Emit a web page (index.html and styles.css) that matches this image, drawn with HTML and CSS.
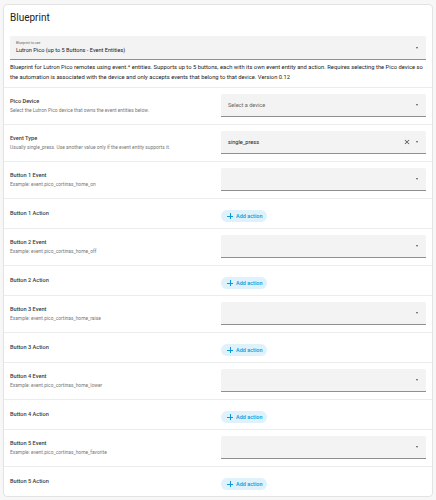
FILE: index.html
```html
<!DOCTYPE html>
<html>
<head>
	<title>Blueprint</title>
	<meta charset="utf-8">
	<link rel="stylesheet" href="styles.css">
</head>
<body>
	<div class="card">
		<!-- 标题 -->
		<h1 class="card-title">Blueprint</h1>
		<!-- 蓝图选择器 -->
		<div class="bp-select">
			<div class="bp-select-text">
				<span class="bp-select-label">Blueprint to use</span>
				<span class="bp-select-value">Lutron Pico (up to 5 Buttons - Event Entities)</span>
			</div>
			<i class="caret"></i>
		</div>
		<p class="bp-desc">Blueprint for Lutron Pico remotes using event.* entities. Supports up to 5 buttons, each with its own event entity and action. Requires selecting the Pico device so the automation is associated with the device and only accepts events that belong to that device. Version 0.12</p>

		<div class="row row-field">
			<div class="row-info">
				<div class="row-name">Pico Device</div>
				<div class="row-sub">Select the Lutron Pico device that owns the event entities below.</div>
			</div>
			<div class="field">
				<span class="field-text placeholder">Select a device</span>
				<i class="caret"></i>
			</div>
		</div>
		<div class="row row-field">
			<div class="row-info">
				<div class="row-name">Event Type</div>
				<div class="row-sub">Usually single_press. Use another value only if the event entity supports it.</div>
			</div>
			<div class="field">
				<span class="field-text">single_press</span>
				<svg class="clear" width="8" height="8" viewBox="0 0 24 24"><path d="M19,6.41L17.59,5L12,10.59L6.41,5L5,6.41L10.59,12L5,17.59L6.41,19L12,13.41L17.59,19L19,17.59L13.41,12L19,6.41Z"/></svg>
				<i class="caret"></i>
			</div>
		</div>

		<div class="row row-field">
			<div class="row-info">
				<div class="row-name">Button 1 Event</div>
				<div class="row-sub">Example: event.pico_cortinas_home_on</div>
			</div>
			<div class="field"><span class="field-text"></span><i class="caret"></i></div>
		</div>
		<div class="row row-action">
			<div class="row-info"><div class="row-name">Button 1 Action</div></div>
			<div class="action-cell"><a href="#" class="add-btn"><i class="plus"></i>Add action</a></div>
		</div>

		<div class="row row-field">
			<div class="row-info">
				<div class="row-name">Button 2 Event</div>
				<div class="row-sub">Example: event.pico_cortinas_home_off</div>
			</div>
			<div class="field"><span class="field-text"></span><i class="caret"></i></div>
		</div>
		<div class="row row-action">
			<div class="row-info"><div class="row-name">Button 2 Action</div></div>
			<div class="action-cell"><a href="#" class="add-btn"><i class="plus"></i>Add action</a></div>
		</div>

		<div class="row row-field">
			<div class="row-info">
				<div class="row-name">Button 3 Event</div>
				<div class="row-sub">Example: event.pico_cortinas_home_raise</div>
			</div>
			<div class="field"><span class="field-text"></span><i class="caret"></i></div>
		</div>
		<div class="row row-action">
			<div class="row-info"><div class="row-name">Button 3 Action</div></div>
			<div class="action-cell"><a href="#" class="add-btn"><i class="plus"></i>Add action</a></div>
		</div>

		<div class="row row-field">
			<div class="row-info">
				<div class="row-name">Button 4 Event</div>
				<div class="row-sub">Example: event.pico_cortinas_home_lower</div>
			</div>
			<div class="field"><span class="field-text"></span><i class="caret"></i></div>
		</div>
		<div class="row row-action">
			<div class="row-info"><div class="row-name">Button 4 Action</div></div>
			<div class="action-cell"><a href="#" class="add-btn"><i class="plus"></i>Add action</a></div>
		</div>

		<div class="row row-field">
			<div class="row-info">
				<div class="row-name">Button 5 Event</div>
				<div class="row-sub">Example: event.pico_cortinas_home_favorite</div>
			</div>
			<div class="field"><span class="field-text"></span><i class="caret"></i></div>
		</div>
		<div class="row row-action">
			<div class="row-info"><div class="row-name">Button 5 Action</div></div>
			<div class="action-cell"><a href="#" class="add-btn"><i class="plus"></i>Add action</a></div>
		</div>
	</div>
</body>
</html>
```
FILE: styles.css
```css
body {
	margin: 0;
	padding: 4px 3px;
	background-color: #f7f7f7;
	font-family: Roboto, "Liberation Sans", Arial, sans-serif;
	color: #212121;
}
i {
	font-style: normal;
}
/* 卡片外框 */
.card {
	background-color: #fff;
	border: 1px solid #e3e3e3;
	border-radius: 4px;
	box-sizing: border-box;
	height: 493px;
	overflow: hidden;
}
.card-title {
	margin: 0;
	padding: 6px 6px 0;
	font-size: 10px;
	font-weight: 400;
	line-height: 14px;
	color: #212121;
}
/* 蓝图选择器 */
.bp-select {
	display: flex;
	align-items: center;
	margin: 11px 6px 0;
	height: 24px;
	padding: 0 6px;
	background-color: #f3f3f3;
	border-bottom: 1px solid #8f8f8f;
	border-radius: 2px 2px 0 0;
	box-sizing: border-box;
}
.bp-select-text {
	flex: 1;
	display: flex;
	flex-direction: column;
}
.bp-select-label {
	font-size: 3.5px;
	line-height: 5px;
	color: #666;
}
.bp-select-value {
	font-size: 5.6px;
	line-height: 9px;
	color: #212121;
}
.caret {
	width: 0;
	height: 0;
	border-left: 1.5px solid transparent;
	border-right: 1.5px solid transparent;
	border-top: 2px solid #555;
	margin-right: 2px;
}
.bp-desc {
	margin: 0;
	padding: 2px 6px 5px;
	font-size: 5.8px;
	line-height: 10px;
	color: #212121;
}
/* 每一行 */
.row {
	display: flex;
	align-items: center;
	border-top: 1px solid #ececec;
	padding: 0 6px;
}
.row-field {
	height: 37px;
	box-sizing: border-box;
}
.row-action {
	height: 30px;
	box-sizing: border-box;
}
.row-info {
	width: 211px;
	flex-shrink: 0;
}
.row-name {
	font-size: 5.6px;
	line-height: 9px;
	font-weight: 500;
	color: #3a3a3a;
}
.row-sub {
	font-size: 4.9px;
	line-height: 9px;
	color: #777;
}
.field {
	flex: 1;
	display: flex;
	align-items: center;
	height: 23px;
	padding: 0 6px 0 7px;
	background-color: #f3f3f3;
	border-bottom: 1px solid #8f8f8f;
	border-radius: 2px 2px 0 0;
	box-sizing: border-box;
	margin-top: -1px;
}
.field-text {
	flex: 1;
	font-size: 5.6px;
	color: #212121;
}
.field-text.placeholder {
	color: #666;
}
.clear {
	fill: #444;
	margin-right: 5px;
}
.action-cell {
	flex: 1;
}
/* 添加动作按钮 */
.add-btn {
	display: inline-flex;
	align-items: center;
	height: 12px;
	padding: 0 5px 0 6px;
	border-radius: 6px;
	background-color: #dff1fb;
	color: #0a9ad9;
	font-size: 5.5px;
	font-weight: 500;
	text-decoration: none;
}
.plus {
	position: relative;
	width: 6px;
	height: 6px;
	margin-right: 3px;
}
.plus::before, .plus::after {
	content: '';
	position: absolute;
	background-color: #0a9ad9;
}
.plus::before {
	left: 2.5px;
	top: 0;
	width: 1px;
	height: 6px;
}
.plus::after {
	left: 0;
	top: 2.5px;
	width: 6px;
	height: 1px;
}
```
